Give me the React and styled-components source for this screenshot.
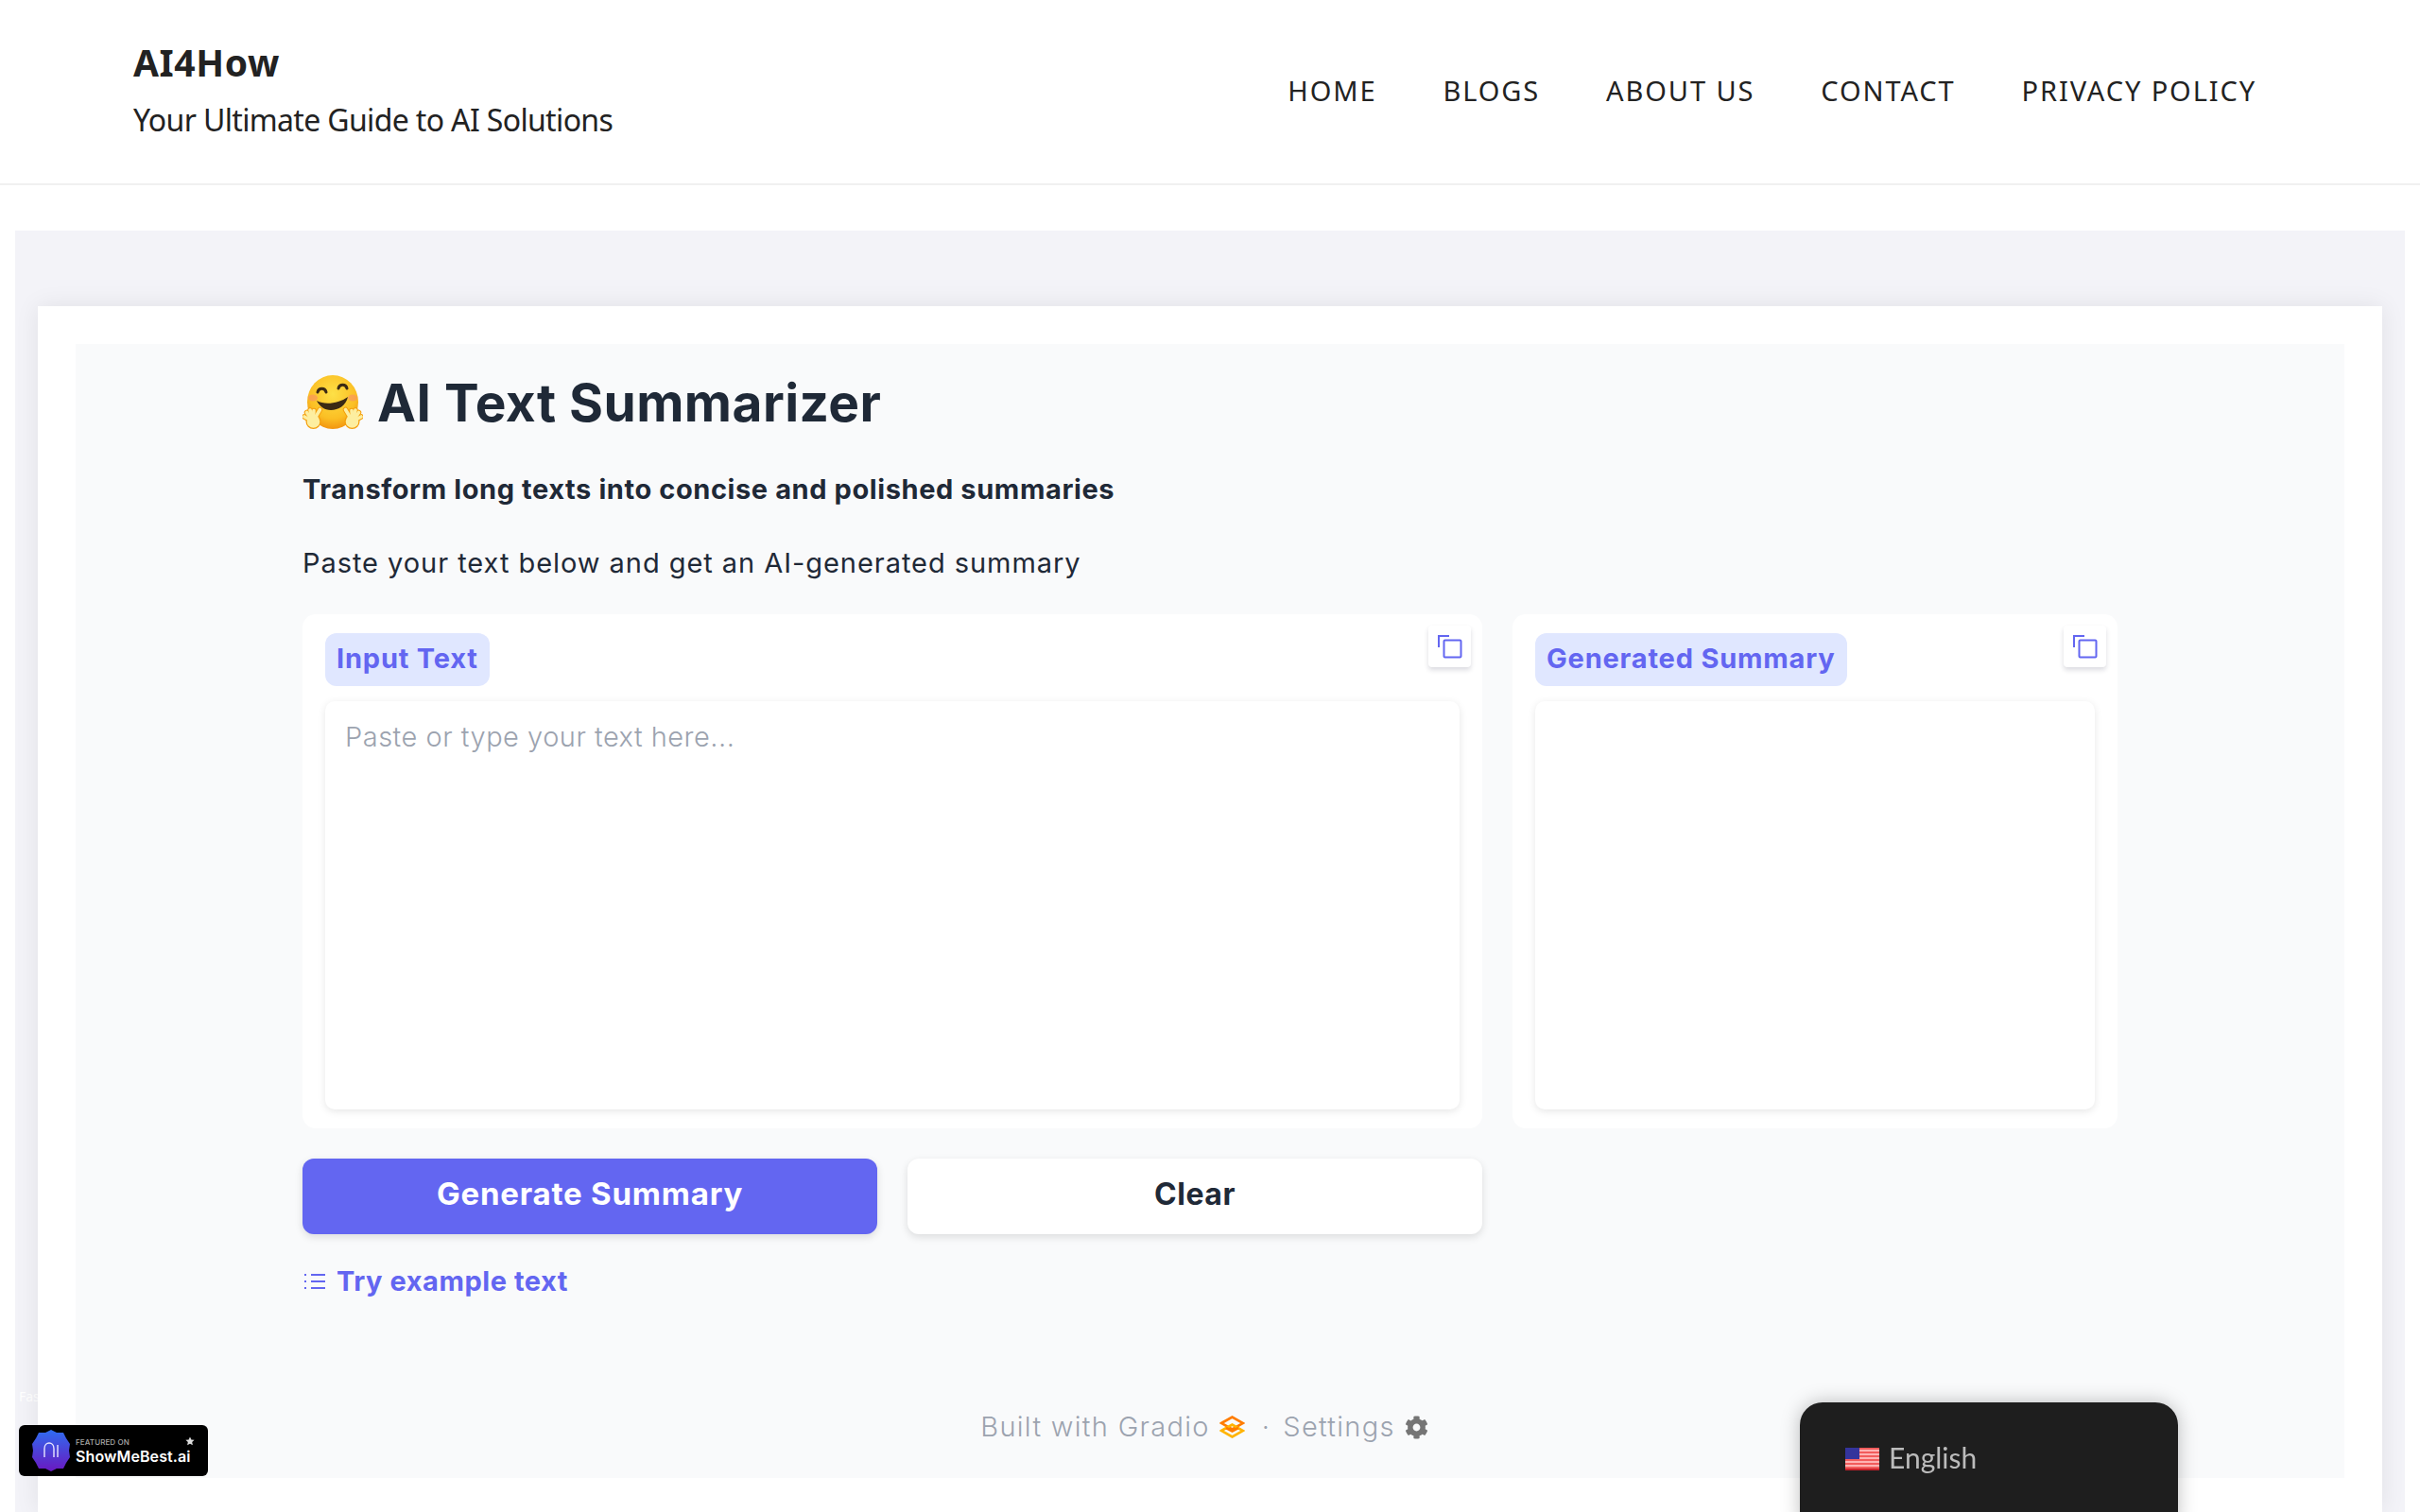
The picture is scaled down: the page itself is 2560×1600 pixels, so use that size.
import React from 'react'
import styled, { createGlobalStyle } from 'styled-components'
import { FaCog } from 'react-icons/fa'

const navItems = ['HOME', 'BLOGS', 'ABOUT US', 'CONTACT', 'PRIVACY POLICY']
const fingers = [[2, 44], [4.5, 39.5], [8, 37], [12, 37.5], [18.5, 36.5]]

const GlobalStyle = createGlobalStyle`
  html, body {
    margin: 0;
    height: 1600px;
    overflow: hidden;
    background: #fff;
  }
  * { box-sizing: border-box; }
`

const Header = styled.header`
  height: 196px;
  padding: 0 173px 0 141px;
  display: flex;
  align-items: center;
  justify-content: space-between;
  background: #fff;
  border-bottom: 2px solid #f0f0f0;
`

const Brand = styled.div`
  display: flex;
  flex-direction: column;
  gap: 18px;
  padding-bottom: 4px;
  color: #222;
`

const BrandName = styled.div`
  font: 700 39px/46px "Noto Sans", sans-serif;
  letter-spacing: 0.6px;
`

const Tagline = styled.div`
  font: 400 32px/40px "Noto Sans", sans-serif;
  letter-spacing: -0.65px;
`

const Nav = styled.nav`
  display: flex;
  gap: 70px;
  padding-bottom: 2px;
`

const NavLink = styled.a`
  font: 400 29px/34px "Noto Sans", sans-serif;
  letter-spacing: 1.9px;
  color: #222;
`

const Band = styled.div`
  margin: 48px 16px 0;
  padding: 80px 24px 0;
  height: 1356px;
  background: #f3f3f8;
  position: relative;
`

const FaintLabel = styled.span`
  position: absolute;
  left: 4px;
  top: 1225px;
  font: 400 14px/18px "Noto Sans", sans-serif;
  color: #fff;
`

const Card = styled.div`
  position: relative;
  height: 1276px;
  padding: 40px 40px 0;
  background: #fff;
  box-shadow: 0 0 24px rgba(0, 0, 0, 0.08);
`

const Inner = styled.main`
  height: 1200px;
  padding: 0 240px;
  background: #f9fafb;
`

const TitleRow = styled.h1`
  margin: 0;
  padding-bottom: 4px;
  height: 128px;
  display: flex;
  align-items: center;
  gap: 15px;
  font: 700 55px/64px Inter, sans-serif;
  letter-spacing: 0.45px;
  color: #1f2937;
`

const Lead = styled.p`
  margin: 0;
  padding-top: 8px;
  height: 60px;
  font: 700 29px/36px Inter, sans-serif;
  letter-spacing: 0.59px;
  color: #1f2937;
`

const Hint = styled.p`
  margin: 0;
  padding-top: 26px;
  height: 98px;
  font: 400 29px/36px Inter, sans-serif;
  letter-spacing: 0.95px;
  color: #1f2937;
`

const Columns = styled.div`
  display: grid;
  grid-template-columns: 1248px 640px;
  gap: 32px;
`

const Panel = styled.section`
  position: relative;
  height: 544px;
  padding: 20px 24px;
  display: flex;
  flex-direction: column;
  gap: 16px;
  background: #fff;
  border-radius: 14px;
`

const Label = styled.span`
  align-self: flex-start;
  height: 56px;
  padding: 0 12px 2px;
  display: flex;
  align-items: center;
  background: #e0e7ff;
  border-radius: 12px;
  font: 700 29px/36px Inter, sans-serif;
  letter-spacing: 0.8px;
  color: #6366f1;
`

const CopyButton = styled.button`
  position: absolute;
  top: 12px;
  right: 12px;
  width: 45px;
  height: 44px;
  padding: 0;
  display: flex;
  align-items: center;
  justify-content: center;
  border: 0;
  background: #fff;
  border-radius: 4px;
  box-shadow: 0 3px 5px rgba(30, 30, 60, 0.16);
`

const TextBox = styled.div`
  flex: 1;
  padding: 15px 21px;
  background: #fff;
  border-radius: 10px;
  box-shadow: 0 2px 8px rgba(0, 0, 0, 0.1);
  font: 300 29px/46px Inter, sans-serif;
  letter-spacing: 0.5px;
  color: #9ca3af;
`

const Actions = styled.div`
  margin-top: 32px;
  width: 1248px;
  display: grid;
  grid-template-columns: 1fr 1fr;
  gap: 32px;
`

const ActionButton = styled.button`
  height: 80px;
  padding: 0 0 ${p => (p.$primary ? '6px' : '4px')};
  border: 0;
  border-radius: 12px;
  font: 700 ${p => (p.$primary ? '33px' : '32px')}/40px Inter, sans-serif;
  letter-spacing: ${p => (p.$primary ? '0.8px' : '0.5px')};
  color: ${p => (p.$primary ? '#fff' : '#1f2937')};
  background: ${p => (p.$primary ? '#6366f1' : '#fff')};
  box-shadow: 0 3px 8px rgba(0, 0, 0, 0.12);
`

const ExampleLink = styled.a`
  margin-top: 32px;
  display: flex;
  align-items: center;
  gap: 12px;
  padding-left: 2px;
  height: 36px;
  font: 700 29px/36px Inter, sans-serif;
  letter-spacing: 0.55px;
  color: #6366f1;
`

const Footer = styled.footer`
  margin-top: 118px;
  padding-right: 12px;
  display: flex;
  align-items: center;
  justify-content: center;
  font: 300 29px/36px Inter, sans-serif;
  letter-spacing: 1.3px;
  color: #9ca3af;
`

const FooterGroup = styled.span`
  display: flex;
  align-items: center;
  gap: 10px;
`

const FooterDot = styled.span`
  margin: 0 13px 0 18px;
`

const GearIcon = styled(FaCog)`
  width: 25px;
  height: 25px;
  color: #757575;
`

const LanguageBox = styled.div`
  position: fixed;
  left: 1904px;
  top: 1484px;
  width: 400px;
  height: 140px;
  padding: 38px 48px;
  display: flex;
  align-items: flex-start;
  gap: 10px;
  background: #1e1e1e;
  border-radius: 24px;
  box-shadow: 0 0 20px rgba(0, 0, 0, 0.25);
  font: 400 30px/40px Lato, sans-serif;
  color: #bbb;
`

const FlagWrap = styled.span`
  display: flex;
  margin-top: 10px;
`

const Badge = styled.a`
  position: fixed;
  left: 20px;
  top: 1508px;
  width: 200px;
  height: 54px;
  padding: 0 14px;
  display: flex;
  align-items: center;
  gap: 6px;
  background: #000;
  border-radius: 6px;
`

const BadgeText = styled.span`
  position: relative;
  flex: 1;
  display: flex;
  flex-direction: column;
  color: #fff;
`

const BadgeSmall = styled.span`
  font: 500 8px/12px Inter, sans-serif;
  letter-spacing: 0.1px;
  color: #a8a8a8;
`

const BadgeName = styled.span`
  font: 600 16px/19px Inter, sans-serif;
  letter-spacing: 0.1px;
`

const BadgeStar = styled.svg`
  position: absolute;
  right: 0;
  top: 0;
`

const Hand = ({ flip }) => (
  <g transform={flip ? 'translate(64 0) scale(-1 1)' : undefined} strokeLinecap="round" fill="none">
    {fingers.map(([x, y]) => (
      <line key={x} x1="11" y1="49" x2={x} y2={y} stroke="#f59e0b" strokeWidth="5.5" />
    ))}
    <circle cx="11.5" cy="49" r="8" fill="#f59e0b" />
    {fingers.map(([x, y]) => (
      <line key={x} x1="11" y1="49" x2={x} y2={y} stroke="#fdeea0" strokeWidth="3.6" />
    ))}
    <circle cx="11.5" cy="49" r="6.8" fill="#fdeea0" />
  </g>
)

const HugEmoji = () => (
  <svg width="64" height="58" viewBox="0 0 64 58">
    <defs>
      <radialGradient id="hugFace" cx="50%" cy="35%" r="70%">
        <stop offset="0%" stopColor="#fde047" />
        <stop offset="65%" stopColor="#fbbf24" />
        <stop offset="100%" stopColor="#f08a0b" />
      </radialGradient>
    </defs>
    <ellipse cx="32" cy="28.5" rx="27" ry="28.5" fill="url(#hugFace)" />
    <ellipse cx="11" cy="24" rx="5" ry="3.5" fill="#f98a6b" opacity="0.55" />
    <ellipse cx="53" cy="24" rx="5" ry="3.5" fill="#f98a6b" opacity="0.55" />
    <path d="M16 18c1-5 8-5 9 0M38 14c1-5 8-5 9 0" fill="none" stroke="#3b2a14" strokeWidth="3" strokeLinecap="round" />
    <path d="M15 27c9 5 23 3 33-4 -2 9-10 14-18 14 -7 0-12-4-15-10z" fill="#3b2a14" />
    <Hand />
    <Hand flip />
  </svg>
)

const CopyIcon = () => (
  <svg width="26" height="26" viewBox="0 0 26 26" fill="none" stroke="#6366f1" strokeWidth="2">
    <path d="M1 14V2h11" />
    <rect x="6.5" y="6.5" width="18" height="18" rx="1" />
  </svg>
)

const ListIcon = () => (
  <svg width="22" height="18" viewBox="0 0 22 18" fill="none" stroke="#6366f1" strokeWidth="2">
    <path d="M7 2h15M7 9h15M7 16h15" />
    <path d="M0 2h3M0 9h3M0 16h3" strokeDasharray="2 1" />
  </svg>
)

const GradioLogo = () => (
  <svg width="27" height="24" viewBox="0 0 27 24" fill="none" strokeWidth="2.6">
    <path d="M2 8l11.5-6.5L25 8l-11.5 6.5z" stroke="#ff7c00" />
    <path d="M2 16l11.5-6.5L25 16l-11.5 6.5z" stroke="#ffb300" />
    <path d="M7 13l6.5 3.5L20 13" stroke="#ff7c00" />
  </svg>
)

const UsFlag = () => (
  <svg width="36" height="24" viewBox="0 0 36 24">
    <rect width="36" height="24" fill="#ffb3b3" />
    {[0, 4, 8, 12, 16, 20].map(y => (
      <rect key={y} y={y} width="36" height="2" fill="#f25c5c" />
    ))}
    <rect y="22" width="36" height="2" fill="#c8202a" />
    <rect width="15" height="12" fill="#34349c" />
  </svg>
)

const BadgeLogo = () => (
  <svg width="40" height="44" viewBox="0 0 40 44">
    <defs>
      <linearGradient id="badgeFill" x1="0" y1="0" x2="0" y2="1">
        <stop offset="0%" stopColor="#2f6cf0" />
        <stop offset="100%" stopColor="#6a18c0" />
      </linearGradient>
    </defs>
    <path d="M20 0l6 3 7 0 3 6 4 6-1 7 1 7-4 6-3 6-7 0-6 3-6-3-7 0-3-6-4-6 1-7-1-7 4-6 3-6 7 0z" fill="url(#badgeFill)" />
    <path d="M13 29V20c0-8 10-8 10 0v9M27 16v13" fill="none" stroke="#e8e6ff" strokeWidth="1.4" />
  </svg>
)

const App = () => {
  return (
    <>
      <GlobalStyle />
      <Header>
        <Brand>
          <BrandName>AI4How</BrandName>
          <Tagline>Your Ultimate Guide to AI Solutions</Tagline>
        </Brand>
        <Nav>
          {navItems.map(item => (
            <NavLink key={item}>{item}</NavLink>
          ))}
        </Nav>
      </Header>
      <Band>
        <FaintLabel>Fast</FaintLabel>
        <Card>
          <Inner>
            <TitleRow><HugEmoji />AI Text Summarizer</TitleRow>
            <Lead>Transform long texts into concise and polished summaries</Lead>
            <Hint>Paste your text below and get an AI-generated summary</Hint>
            <Columns>
              <Panel>
                <Label>Input Text</Label>
                <CopyButton><CopyIcon /></CopyButton>
                <TextBox>Paste or type your text here...</TextBox>
              </Panel>
              <Panel>
                <Label>Generated Summary</Label>
                <CopyButton><CopyIcon /></CopyButton>
                <TextBox />
              </Panel>
            </Columns>
            <Actions>
              <ActionButton $primary>Generate Summary</ActionButton>
              <ActionButton>Clear</ActionButton>
            </Actions>
            <ExampleLink><ListIcon />Try example text</ExampleLink>
            <Footer>
              <FooterGroup>Built with Gradio <GradioLogo /></FooterGroup>
              <FooterDot>·</FooterDot>
              <FooterGroup>Settings <GearIcon /></FooterGroup>
            </Footer>
          </Inner>
        </Card>
      </Band>
      <Badge>
        <BadgeLogo />
        <BadgeText>
          <BadgeSmall>FEATURED ON</BadgeSmall>
          <BadgeName>ShowMeBest.ai</BadgeName>
          <BadgeStar width="10" height="10" viewBox="0 0 24 24">
            <path d="M12 1l3.4 7.4 7.6.8-5.7 5.2 1.6 7.9L12 18.3 5.1 22.3l1.6-7.9L1 9.2l7.6-.8z" fill="#ddd" />
          </BadgeStar>
        </BadgeText>
      </Badge>
      <LanguageBox>
        <FlagWrap><UsFlag /></FlagWrap>
        English
      </LanguageBox>
    </>
  )
}

export default App
